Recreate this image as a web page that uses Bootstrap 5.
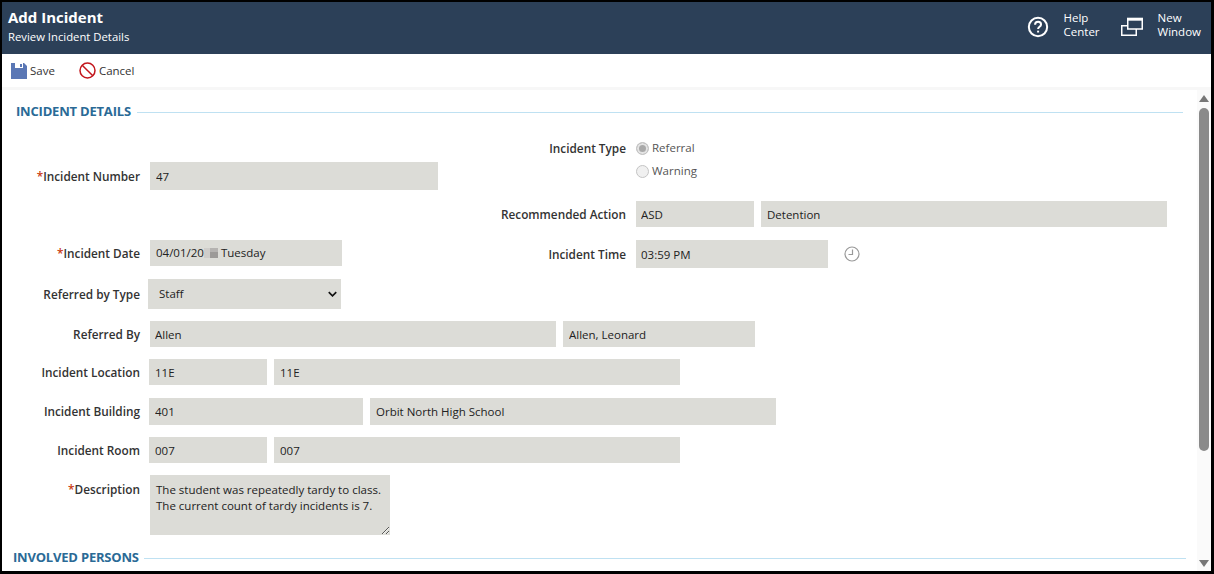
<!DOCTYPE html>
<html lang="en">
<head>
    <meta charset="UTF-8">
    <meta name="viewport" content="width=device-width, initial-scale=1.0">
    <title>Add Incident</title>
    <link href="https://cdn.jsdelivr.net/npm/bootstrap@5.3.3/dist/css/bootstrap.min.css" rel="stylesheet">
    <script src="https://cdn.jsdelivr.net/npm/bootstrap@5.3.3/dist/js/bootstrap.bundle.min.js"></script>
    <style>
        html, body { height: 100%; overflow: hidden; }
        body { font-family: "Open Sans", "Noto Sans", sans-serif; font-size: 11.5px; color: #222; background: #fff; }
        .app-frame { width: 1214px; height: 574px; border: 2px solid #000; border-right-width: 3px; border-bottom-width: 3px; }
        .app-head { height: 52px; flex: none; background: #2c4058; color: #fff; padding: 0 10px 6px 6px; }
        .app-title { font-size: 15px; font-weight: 700; line-height: 20px; margin-bottom: 2px; }
        .app-sub { font-size: 11.3px; line-height: 15px; }
        .head-link { font-size: 11.5px; line-height: 14px; color: #fff; }
        .help-icon { margin-top: 4px; }
        .help-gap { margin-left: 15px; margin-right: 21px; }
        .win-gap { margin-right: 15px; margin-top: 3px; }
        .app-tools { height: 33px; flex: none; padding-left: 9px; gap: 24px; }
        .tools-rule { height: 3px; flex: none; background: #f7f7f7; }
        .tool-item { font-size: 11.5px; color: #333; }
        .tool-icon { margin-right: 3px; }
        .scroll-zone { height: 481px; }
        .form-zone { width: 1195px; flex: none; }
        .scroll-rail { width: 14px; flex: none; background: #fafafa; }
        .rail-thumb { width: 10px; height: 343px; background: #8a8a8a; border-radius: 5px; margin: 6px auto 0; }
        .rail-end { width: 0; height: 0; border-left: 5px solid transparent; border-right: 5px solid transparent; margin: 5px auto 0; }
        .rail-up { border-bottom: 7px solid #777; }
        .rail-down { border-top: 7px solid #777; margin: auto auto 4px; }
        .sect-title { font-size: 13px; font-weight: 700; color: #2a6a96; white-space: nowrap; letter-spacing: -0.2px; }
        .sect-line { height: 1px; background: #bfe1f2; }
        .sect-one { padding: 0 14px 0 14px; height: 44px; gap: 6px; }
        .sect-two { padding: 0 11px; height: 46px; gap: 5px; }
        .field-label { width: 138px; flex: none; text-align: right; font-weight: 600; font-size: 11.8px; color: #333; margin-right: 10px; padding-top: 1px; }
        .field-label-r { width: 136px; flex: none; text-align: right; font-weight: 600; font-size: 11.8px; color: #333; margin-right: 10px; padding-top: 1px; }
        .req { color: #c8390f; }
        .form-control.gray-field, .form-select.gray-field {
            background-color: #dcdcd7; border: 0; border-radius: 0; font-size: 11.5px; color: #222;
            height: 26px; min-height: 0; padding: 0 6px; box-shadow: none; flex: none;
        }
        .form-control.gray-field.pad-5 { padding: 0 5px; }
        .form-select.gray-field {
            height: 30px; padding-left: 11px; margin-left: -2px; width: 193px;
            background-image: url("data:image/svg+xml,%3csvg xmlns='http://www.w3.org/2000/svg' viewBox='0 0 12 8'%3e%3cpath fill='none' stroke='%23111' stroke-width='2.200' d='M1 1.500l5 5 5-5'/%3e%3c/svg%3e");
            background-position: right 4px center; background-size: 9px 6px;
        }
        .left-side { width: 488px; flex: none; }
        .row-type { height: 56px; }
        .row-action { height: 37px; }
        .row-date { height: 41px; padding-top: 13px; }
        .row-select { height: 41px; }
        .row-std { height: 38px; }
        .row-tall { height: 40px; }
        .row-desc { margin-top: 12px; }
        .form-control.h-28 { height: 28px; }
        .form-control.h-27 { height: 27px; }
        .w-50 { width: 406px !important; }
        .w-190 { width: 192px !important; }
        .w-214 { width: 214px !important; }
        .w-288 { width: 288px !important; }
        .w-118 { width: 118px !important; }
        .shift-l { margin-left: -1px; }
        .gap-7 { gap: 7px; }
        .gap-7 .field-label { margin-right: 3px; }
        .gap-7 .field-label-r { margin-right: 3px; }
        .type-label { margin-top: 5px; }
        .radio-stack { padding-top: 7px; gap: 9px; }
        .radio-stack .form-check-input { width: 13px; height: 13px; margin: 0 3px 0 0; opacity: 1; background-color: #f0f0f0; border-color: #c4c4c4; }
        .radio-stack .form-check-input:checked { background-color: #a9a9a9; box-shadow: inset 0 0 0 2px #e4e4e4; border-color: #c4c4c4; background-image: none; }
        .radio-stack label { color: #555; line-height: 14px; }
        .desc-box.form-control { width: 240px; height: 60px; background-color: #dcdcd7; border: 0; border-radius: 0; font-size: 11.5px; line-height: 16px; color: #222; padding: 7px 6px; box-shadow: none; }
        .desc-label { margin-top: 5px; }
    </style>
</head>
<body>
<div class="app-frame d-flex flex-column">
    <div class="app-head d-flex align-items-center justify-content-between">
        <div>
            <div class="app-title">Add Incident</div>
            <div class="app-sub">Review Incident Details</div>
        </div>
        <div class="d-flex align-items-center">
            <svg width="22" height="22" viewBox="0 0 24 24" fill="none" stroke="#fff" stroke-width="2.200" class="help-icon">
                <circle cx="12" cy="12" r="10"/>
                <path d="M8.800 9.500c0-2 1.500-3.200 3.300-3.200s3.200 1.200 3.200 2.900c0 2.600-3.200 2.600-3.200 5.100"/>
                <path d="M12.100 16v2"/>
            </svg>
            <div class="head-link help-gap">Help<br>Center</div>
            <svg width="22" height="19" viewBox="0 0 22 19" fill="none" stroke="#fff" stroke-width="1.500" class="win-gap">
                <path d="M6.750 2h14.500v10H6.750z"/>
                <path d="M6 2.200h16" stroke-width="3"/>
                <path d="M6.500 8.750H.75v9.500h14.500V12"/>
            </svg>
            <div class="head-link">New<br>Window</div>
        </div>
    </div>

    <div class="app-tools d-flex align-items-center">
        <div class="tool-item d-flex align-items-center">
            <svg width="16" height="16" viewBox="0 0 16 16" class="tool-icon">
                <path fill="#5a77b5" d="M0 0h13l3 3v13H0z"/>
                <path fill="#fff" d="M4 0h8v5H4z"/>
                <path fill="#5a77b5" d="M9 1h2v3H9z"/>
            </svg>
            Save
        </div>
        <div class="tool-item d-flex align-items-center">
            <svg width="17" height="17" viewBox="0 0 17 17" fill="none" stroke="#c3161c" stroke-width="1.500" class="tool-icon">
                <circle cx="8.500" cy="8.500" r="7.500"/>
                <path d="M3.200 3.200l10.600 10.600"/>
            </svg>
            Cancel
        </div>
    </div>
    <div class="tools-rule"></div>

    <div class="scroll-zone d-flex">
        <div class="form-zone">
            <div class="sect-one d-flex align-items-center">
                <span class="sect-title">INCIDENT DETAILS</span>
                <span class="sect-line flex-grow-1"></span>
            </div>

            <div class="row-type d-flex">
                <div class="left-side d-flex align-items-end">
                    <div class="d-flex align-items-center">
                        <span class="field-label"><span class="req">*</span>Incident Number</span>
                        <input class="form-control gray-field h-28 w-288" value="47" readonly>
                    </div>
                </div>
                <div class="d-flex">
                    <span class="field-label-r type-label">Incident Type</span>
                    <div class="radio-stack d-flex flex-column">
                        <div class="d-flex align-items-center">
                            <input class="form-check-input" type="radio" name="incType" checked disabled>
                            <label>Referral</label>
                        </div>
                        <div class="d-flex align-items-center">
                            <input class="form-check-input" type="radio" name="incType" disabled>
                            <label>Warning</label>
                        </div>
                    </div>
                </div>
            </div>

            <div class="row-action d-flex align-items-end">
                <div class="left-side"></div>
                <div class="d-flex align-items-center gap-7">
                    <span class="field-label-r">Recommended Action</span>
                    <input class="form-control gray-field pad-5 w-118" value="ASD" readonly>
                    <input class="form-control gray-field w-50" value="Detention" readonly>
                </div>
            </div>

            <div class="row-date d-flex align-items-start">
                <div class="left-side d-flex align-items-center">
                    <span class="field-label"><span class="req">*</span>Incident Date</span>
                    <div class="form-control gray-field w-190 d-flex align-items-center">04/01/20<svg width="14" height="10" viewBox="0 0 7 5"><rect width="3" height="5" fill="#cfcdca"/><rect x="3" width="4" height="2" fill="#b5b3b1"/><rect x="3" y="2" width="4" height="3" fill="#9c9a98"/></svg>&nbsp;Tuesday</div>
                </div>
                <div class="d-flex align-items-center">
                    <span class="field-label-r">Incident Time</span>
                    <input class="form-control gray-field pad-5 h-28 w-190" value="03:59 PM" readonly>
                    <svg width="16" height="16" viewBox="0 0 16 16" fill="none" stroke="#999" stroke-width="1.200" class="ms-3">
                        <circle cx="8" cy="8" r="7"/>
                        <path d="M8.500 3.500v5H4.500"/>
                    </svg>
                </div>
            </div>

            <div class="row-select d-flex align-items-end">
                <div class="d-flex align-items-center">
                    <span class="field-label">Referred by Type</span>
                    <select class="form-select gray-field"><option>Staff</option></select>
                </div>
            </div>

            <div class="row-std d-flex align-items-end">
                <div class="d-flex align-items-center gap-7">
                    <span class="field-label">Referred By</span>
                    <input class="form-control gray-field pad-5 w-50" value="Allen" readonly>
                    <input class="form-control gray-field w-190" value="Allen, Leonard" readonly>
                </div>
            </div>

            <div class="row-std d-flex align-items-end">
                <div class="d-flex align-items-center gap-7">
                    <span class="field-label">Incident Location</span>
                    <input class="form-control gray-field w-118 shift-l" value="11E" readonly>
                    <input class="form-control gray-field w-50" value="11E" readonly>
                </div>
            </div>

            <div class="row-tall d-flex align-items-end">
                <div class="d-flex align-items-center gap-7">
                    <span class="field-label">Incident Building</span>
                    <input class="form-control gray-field h-27 w-214 shift-l" value="401" readonly>
                    <input class="form-control gray-field h-27 w-50" value="Orbit North High School" readonly>
                </div>
            </div>

            <div class="row-std d-flex align-items-end">
                <div class="d-flex align-items-center gap-7">
                    <span class="field-label">Incident Room</span>
                    <input class="form-control gray-field w-118 shift-l" value="007" readonly>
                    <input class="form-control gray-field w-50" value="007" readonly>
                </div>
            </div>

            <div class="row-desc d-flex">
                <span class="field-label desc-label"><span class="req">*</span>Description</span>
                <textarea class="form-control desc-box" rows="3" readonly>The student was repeatedly tardy to class.
The current count of tardy incidents is 7.</textarea>
            </div>

            <div class="sect-two d-flex align-items-center">
                <span class="sect-title">INVOLVED PERSONS</span>
                <span class="sect-line flex-grow-1"></span>
            </div>
        </div>
        <div class="scroll-rail d-flex flex-column">
            <div class="rail-end rail-up"></div>
            <div class="rail-thumb"></div>
            <div class="rail-end rail-down"></div>
        </div>
    </div>
</div>
</body>
</html>
